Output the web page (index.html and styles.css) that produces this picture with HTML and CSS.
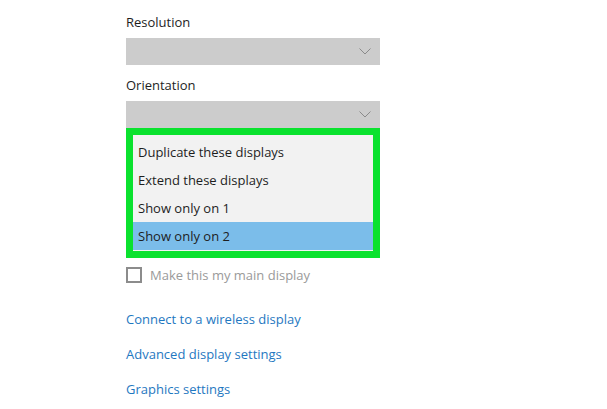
FILE: index.html
```html
<!DOCTYPE html>
<html lang="en">
<head>
    <meta charset="UTF-8">
    <title>Display settings</title>
    <link rel="stylesheet" href="styles.css">
</head>
<body>
    <div class="panel">
        <div class="label first">Resolution</div>
        <div class="dropdown">
            <svg class="chevron" width="12" height="7" viewBox="0 0 12 7"><path d="M0.5 0.5 L6 6 L11.5 0.5" fill="none" stroke="#8a8a8a" stroke-width="1"/></svg>
        </div>

        <div class="label">Orientation</div>
        <div class="dropdown">
            <svg class="chevron" width="12" height="7" viewBox="0 0 12 7"><path d="M0.5 0.5 L6 6 L11.5 0.5" fill="none" stroke="#8a8a8a" stroke-width="1"/></svg>
        </div>

        <div class="menu">
            <div class="menu-list">
                <div class="item">Duplicate these displays</div>
                <div class="item">Extend these displays</div>
                <div class="item">Show only on 1</div>
                <div class="item selected">Show only on 2</div>
            </div>
        </div>

        <div class="check-row">
            <span class="checkbox"></span>
            <span class="check-text">Make this my main display</span>
        </div>

        <div class="links">
            <a href="#">Connect to a wireless display</a>
            <a href="#">Advanced display settings</a>
            <a href="#">Graphics settings</a>
        </div>
    </div>
</body>
</html>
```

FILE: styles.css
```css
body {
    margin: 0;
    background: #fff;
    font-family: "Open Sans", "Noto Sans", sans-serif;
    font-size: 13px;
    color: #1e1e1e;
}
.panel {
    width: 254px;
    margin-left: 126px;
}
.label {
    line-height: 20px;
    margin-top: 10px;
}
.label.first {
    margin-top: 12px;
}
.dropdown {
    height: 27px;
    margin-top: 6px;
    background: #cccccc;
    display: flex;
    align-items: center;
    justify-content: flex-end;
    padding-right: 9px;
}
.chevron {
    display: block;
}
.menu {
    border: 7px solid #0ae22e;
}
.menu-list {
    background: #f2f2f2;
    padding: 3px 0 1px;
}
.item {
    height: 28px;
    line-height: 28px;
    padding-left: 5px;
}
.item.selected {
    background: #7bbdea;
}
.check-row {
    display: flex;
    align-items: center;
    margin-top: 9px;
    height: 16px;
}
.checkbox {
    width: 12px;
    height: 12px;
    border: 2px solid #8c8c8c;
    margin-right: 8px;
}
.check-text {
    color: #9a9a9a;
}
.links {
    display: flex;
    flex-direction: column;
    gap: 15px;
    margin-top: 26px;
}
.links a {
    color: #1f78c1;
    text-decoration: none;
    line-height: 20px;
}
```
